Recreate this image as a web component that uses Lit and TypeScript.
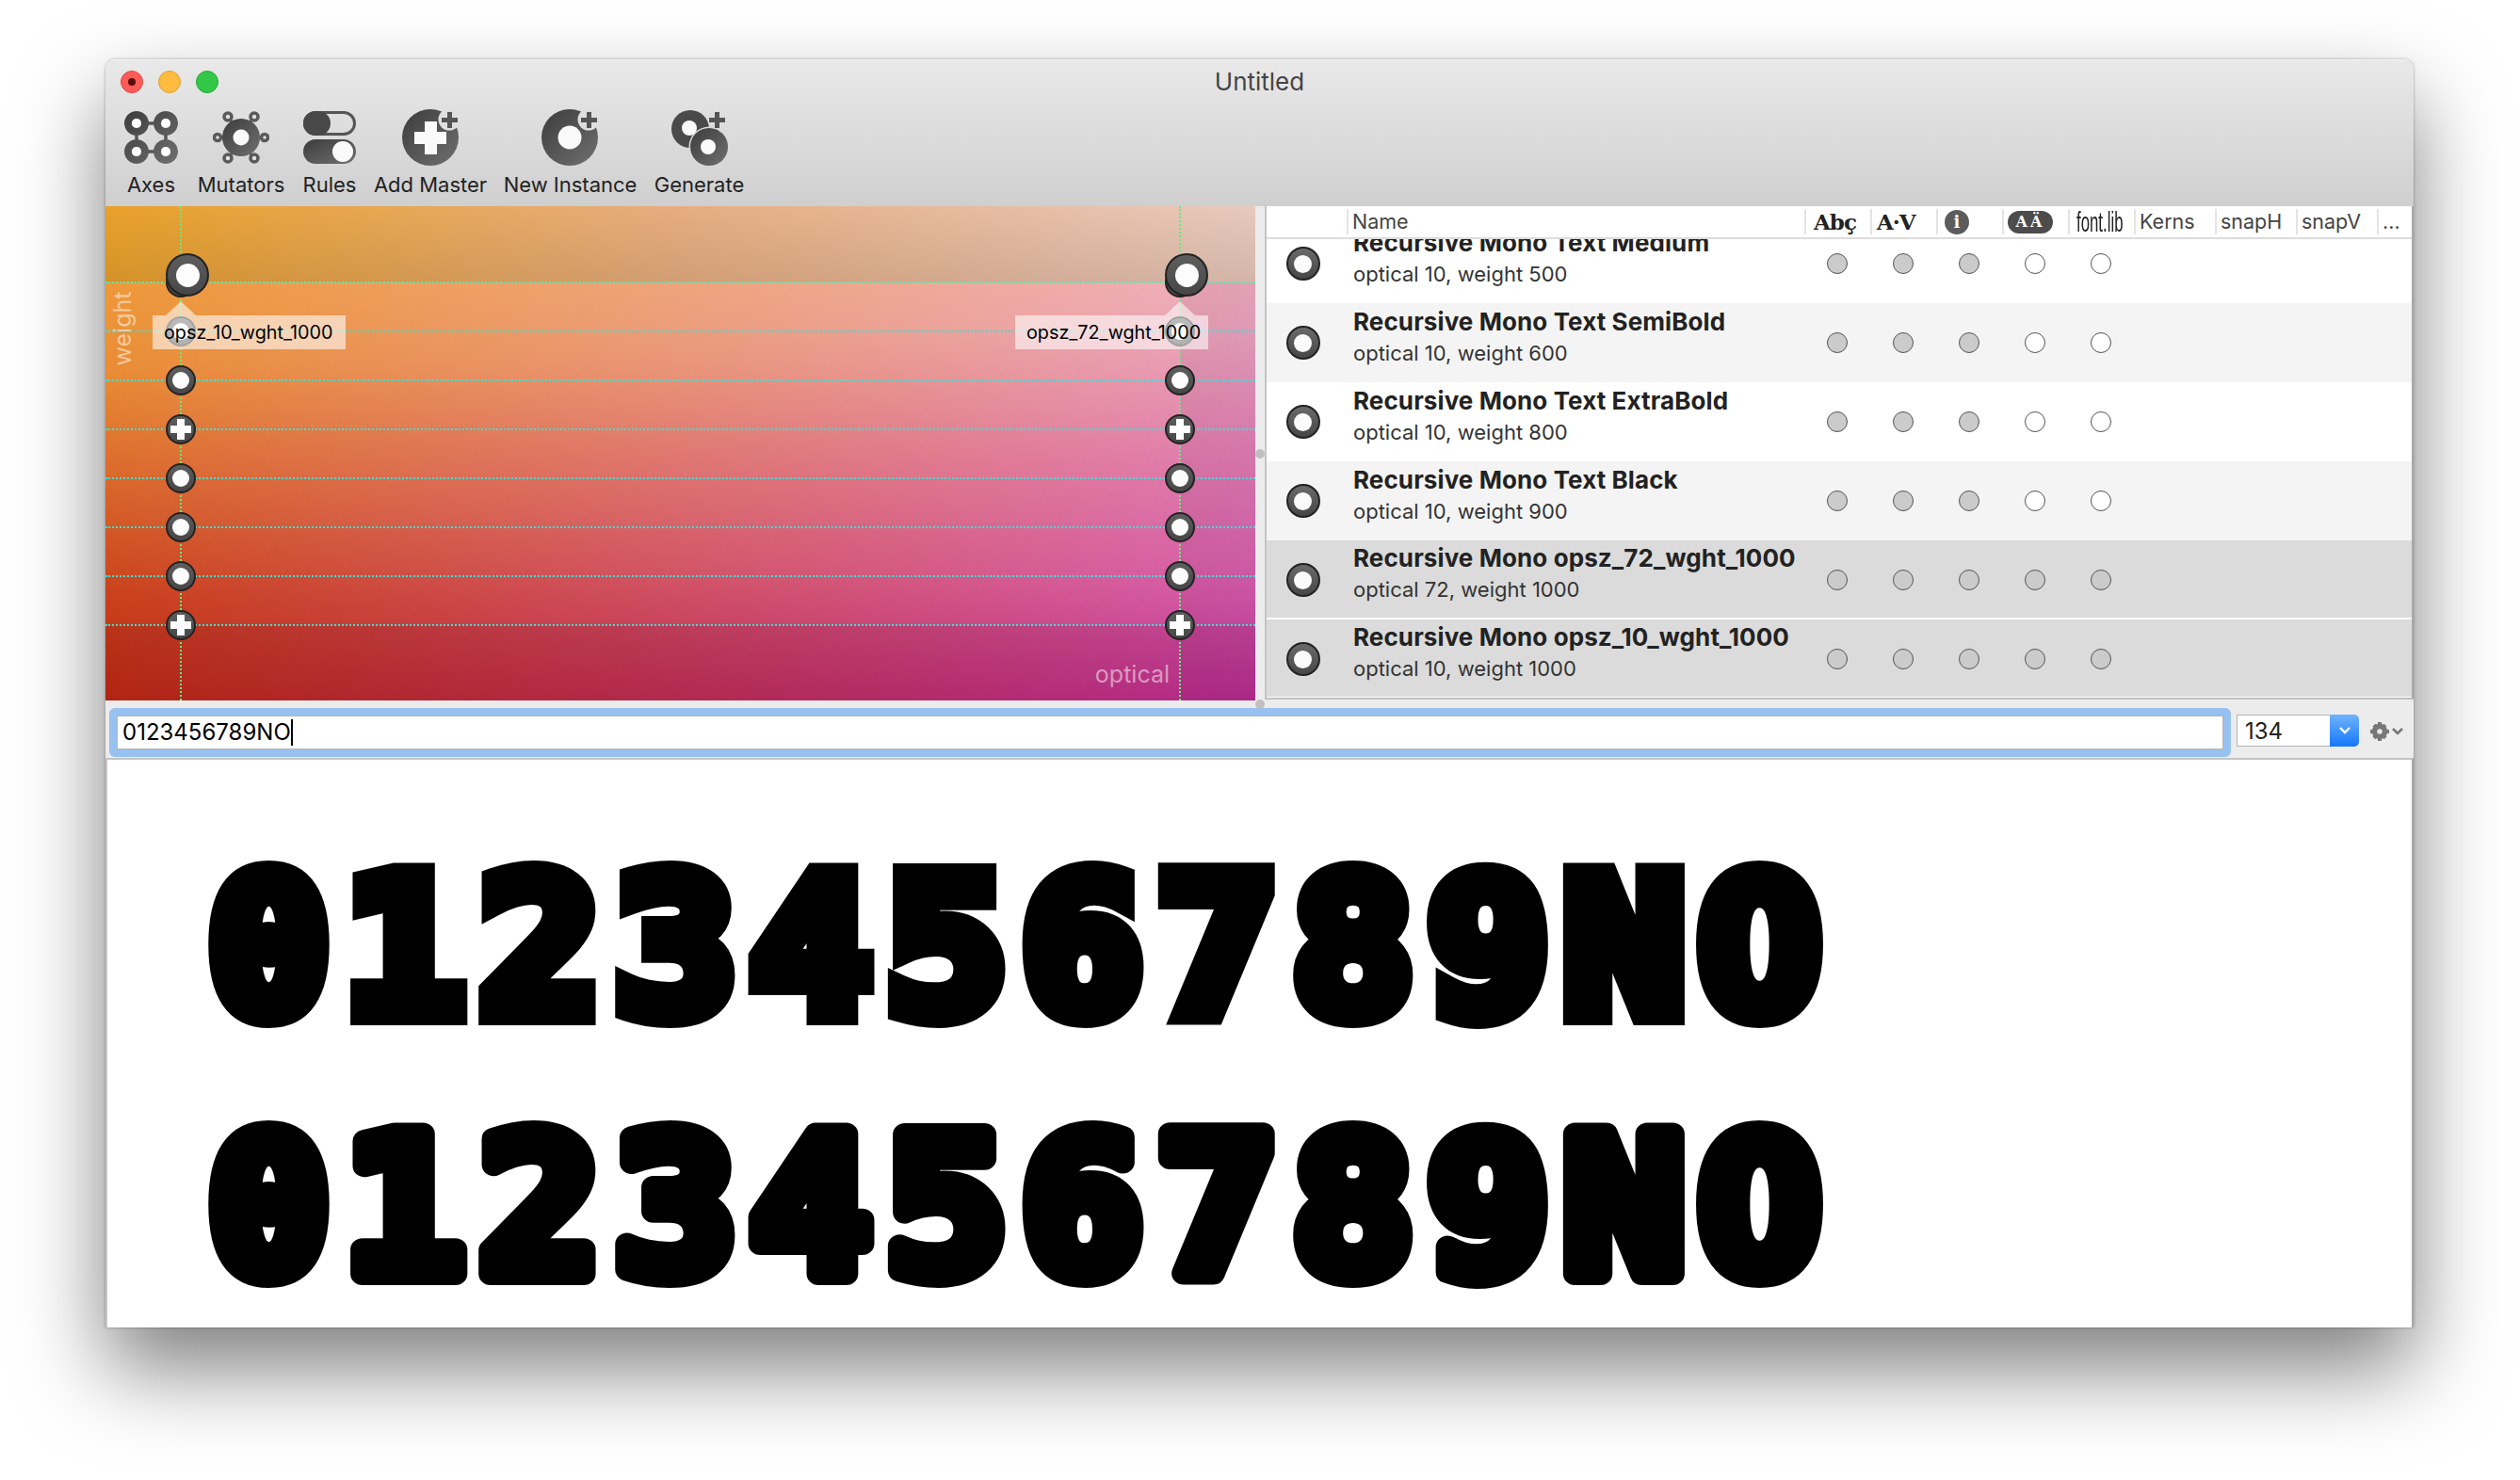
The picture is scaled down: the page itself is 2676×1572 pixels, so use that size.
import { LitElement, html, css, svg } from "lit";
import { customElement } from "lit/decorators.js";

const NAMES = [
  ["Recursive Mono Text Medium", "optical 10, weight 500", ""],
  ["Recursive Mono Text SemiBold", "optical 10, weight 600", "alt"],
  ["Recursive Mono Text ExtraBold", "optical 10, weight 800", ""],
  ["Recursive Mono Text Black", "optical 10, weight 900", "alt"],
  ["Recursive Mono opsz_72_wght_1000", "optical 72, weight 1000", "sel"],
  ["Recursive Mono opsz_10_wght_1000", "optical 10, weight 1000", "sel"],
];

const STOPS = [
  [352, "o"],
  [404, "o"],
  [456, "p"],
  [508, "o"],
  [560, "o"],
  [612, "o"],
  [664, "p"],
];

const DARK = "url(#dk)";

function defs() {
  return svg`<defs><linearGradient id="dk" x1="0" y1="0" x2="1" y2="1">
    <stop offset="0" stop-color="#3c3c3c"/><stop offset="1" stop-color="#707070"/>
  </linearGradient></defs>`;
}

const axesIcon = html`<svg width="57" height="56" viewBox="0 0 57 56">
  ${defs()}
  <path d="M13 13H44V43H13Z" fill="none" stroke="#555" stroke-width="3.5"/>
  <path fill=${DARK} fill-rule="evenodd" d="M13 0a13 13 0 1 0 .01 0ZM13 8a5 5 0 1 1-.01 0ZM44 0a13 13 0 1 0 .01 0ZM44 8a5 5 0 1 1-.01 0ZM13 30a13 13 0 1 0 .01 0ZM13 38a5 5 0 1 1-.01 0ZM44 30a13 13 0 1 0 .01 0ZM44 38a5 5 0 1 1-.01 0Z"/>
  <g fill="#fff"><circle cx="13" cy="13" r="5"/><circle cx="44" cy="13" r="5"/><circle cx="13" cy="43" r="5"/><circle cx="44" cy="43" r="5"/></g>
</svg>`;

const mutatorsIcon = html`<svg width="60" height="56" viewBox="0 0 60 56">
  ${defs()}
  <g stroke="#5a5a5a" stroke-width="3"><path d="M17 6L43 50M43 6L17 50M5 28H55" fill="none"/></g>
  <g fill="#e0e0e0" stroke="#5a5a5a" stroke-width="3.5">
    <circle cx="16" cy="6" r="4"/><circle cx="44" cy="6" r="4"/><circle cx="5" cy="28" r="3.5"/>
    <circle cx="55" cy="28" r="3.5"/><circle cx="16" cy="50" r="4"/><circle cx="44" cy="50" r="4"/>
  </g>
  <circle cx="30" cy="28" r="20" fill=${DARK}/><circle cx="30" cy="28" r="8.5" fill="#fafafa"/>
</svg>`;

const rulesIcon = html`<svg width="56" height="56" viewBox="0 0 56 56">
  ${defs()}
  <rect x="1.5" y="1.5" width="53" height="23" rx="11.5" fill="none" stroke="#555" stroke-width="3"/>
  <path d="M13 0H16A13 13 0 0 1 16 26H13A13 13 0 0 1 13 0Z" fill="#484848"/>
  <rect x="0" y="30" width="56" height="26" rx="13" fill=${DARK}/>
  <circle cx="42" cy="43" r="11" fill="#fafafa"/>
</svg>`;

const addMasterIcon = html`<svg width="60" height="60" viewBox="0 0 60 60">
  ${defs()}
  <circle cx="30" cy="30" r="30" fill=${DARK}/>
  <circle cx="50" cy="11" r="11.5" fill="#dedede"/>
  <path d="M48 3h5v6h6v5h-6v6h-5v-6h-6v-5h6Z" fill="#555"/>
  <path d="M24 13h13v11h10v13H37v11H24V37H13V24h11Z" fill="#fafafa"/>
</svg>`;

const newInstanceIcon = html`<svg width="61" height="60" viewBox="0 0 61 60">
  ${defs()}
  <circle cx="30" cy="30" r="30" fill=${DARK}/>
  <circle cx="50" cy="11" r="11.5" fill="#dedede"/>
  <path d="M48 3h5v6h6v5h-6v6h-5v-6h-6v-5h6Z" fill="#555"/>
  <circle cx="30" cy="30" r="12.5" fill="#fafafa"/>
</svg>`;

const generateIcon = html`<svg width="61" height="60" viewBox="0 0 61 60">
  ${defs()}
  <circle cx="21" cy="21" r="20" fill="#4a4a4a"/>
  <circle cx="41" cy="40" r="21.5" fill="#d8d8d8"/>
  <circle cx="41" cy="40" r="20" fill=${DARK}/>
  <circle cx="20" cy="20" r="8" fill="#fafafa"/>
  <circle cx="40" cy="40" r="8" fill="#fafafa"/>
  <path d="M47 3h5v6h6v5h-6v6h-5v-6h-6v-5h6Z" fill="#555"/>
</svg>`;

const TOOLS = [
  ["Axes", axesIcon, 59],
  ["Mutators", mutatorsIcon, 92],
  ["Rules", rulesIcon, 56],
  ["Add Master", addMasterIcon, 118],
  ["New Instance", newInstanceIcon, 139],
  ["Generate", generateIcon, 95],
] as const;

function handle(x: number, y: number, d: number, kind: string) {
  const hole = d > 40 ? 25 : 18;
  return html`<div
    class="handle"
    style="left:${x - d / 2}px;top:${y - d / 2}px;width:${d}px;height:${d}px"
  >
    ${kind === "p"
      ? html`<svg width="22" height="22" viewBox="0 0 22 22"><path d="M7 0h8v7h7v8h-7v7H7v-7H0V7h7Z" fill="#fff"/></svg>`
      : html`<span class="hole" style="width:${hole}px;height:${hole}px"></span>`}
  </div>`;
}

function listIcon() {
  return html`<span class="ring"><span></span></span>`;
}

const DIGITS = "0123456789NO";
// glyphs are stretched 5% wide, so positions are divided back by the same factor
const XS = Array.from({ length: 12 }, (_, i) => (107 + i * 143.9) / 1.05).join(" ");

@customElement("app-root")
export class AppRoot extends LitElement {
  static styles = css`
    :host {
      display: block;
      width: 2676px;
      height: 1572px;
      padding: 63px 112px 0;
      box-sizing: border-box;
      background: #fff;
      font-family: Inter, "Liberation Sans", sans-serif;
      color: #222;
      overflow: hidden;
    }
    .window {
      width: 2451px;
      height: 1347px;
      display: flex;
      flex-direction: column;
      border-radius: 10px 10px 0 0;
      overflow: hidden;
      box-shadow: 0 44px 90px rgba(0, 0, 0, 0.5), 0 0 3px rgba(0, 0, 0, 0.35);
      background: #fff;
    }
    .top {
      height: 156px;
      flex: none;
      position: relative;
      background: linear-gradient(#e9e9e9, #cfcfcf);
      border-top: 1px solid #f4f4f4;
      box-sizing: border-box;
    }
    .lights {
      display: flex;
      gap: 16px;
      padding: 11px 0 0 16px;
    }
    .light {
      width: 24px;
      height: 24px;
      border-radius: 50%;
      box-sizing: border-box;
      display: flex;
      align-items: center;
      justify-content: center;
    }
    .light.r {
      background: #fc5b57;
      border: 1px solid #e2463f;
    }
    .light.r::after {
      content: "";
      width: 8px;
      height: 8px;
      border-radius: 50%;
      background: #5a0d0a;
    }
    .light.y {
      background: #fdbc40;
      border: 1px solid #dea034;
    }
    .light.g {
      background: #33c748;
      border: 1px solid #27aa35;
    }
    .title {
      position: absolute;
      top: 8px;
      left: 0;
      right: 0;
      text-align: center;
      font-size: 26px;
      line-height: 30px;
      color: #444;
    }
    .tools {
      display: flex;
      gap: 20px;
      padding: 17px 0 0 19px;
    }
    .tool {
      display: flex;
      flex-direction: column;
      align-items: center;
      height: 98px;
    }
    .tool .ic {
      height: 60px;
      display: flex;
      align-items: center;
    }
    .tool .lb {
      margin-top: 7px;
      font-size: 22px;
      line-height: 26px;
      white-space: nowrap;
      color: #222;
    }
    .split {
      height: 525px;
      flex: none;
      display: flex;
      background: #ececec;
    }
    .canvas {
      width: 1221px;
      position: relative;
      overflow: hidden;
      background: linear-gradient(
        #f3a33c 0,
        #ea8e36 32%,
        #d9642a 58%,
        #c9401b 80%,
        #bd2a10 100%
      );
    }
    .canvas .right {
      position: absolute;
      inset: 0;
      background: linear-gradient(
        #f5bcbc 0,
        #eba8c0 25%,
        #e07db4 52%,
        #d65fae 76%,
        #c03299 100%
      );
      -webkit-mask-image: linear-gradient(to right, transparent 0, #000 100%);
      mask-image: linear-gradient(to right, transparent 0, #000 100%);
    }
    .canvas .band {
      position: absolute;
      left: 0;
      right: 0;
      top: 0;
      height: 81px;
      background: linear-gradient(rgba(150, 130, 90, 0) 0, rgba(60, 40, 30, 0.12) 100%);
    }
    .canvas .low {
      position: absolute;
      left: 0;
      right: 0;
      top: 445px;
      bottom: 0;
      background: rgba(80, 0, 40, 0.1);
    }
    .canvas .side {
      position: absolute;
      left: 1141px;
      right: 0;
      top: 81px;
      bottom: 0;
      background: rgba(80, 0, 60, 0.08);
    }
    .band-top {
      position: absolute;
      left: 0;
      right: 0;
      top: 0;
      height: 81px;
      background: linear-gradient(to right, #e9a12a, #e6ae80 50%, #e8c9bd);
    }
    .hline {
      position: absolute;
      left: 0;
      right: 0;
      height: 0;
      border-top: 2px dotted #2fe6d8;
    }
    .hline.first {
      border-top-color: #5ae9b0;
    }
    .vline {
      position: absolute;
      top: 0;
      bottom: 0;
      width: 0;
      border-left: 2px dotted #62ec82;
    }
    .handle {
      position: absolute;
      display: flex;
      align-items: center;
      justify-content: center;
      box-sizing: border-box;
      border-radius: 50%;
      background: linear-gradient(#5e5e5e, #474747);
      border: 2px solid #222;
    }
    .hole {
      border-radius: 50%;
      background: #fcfcfc;
    }
    .tip {
      position: absolute;
      top: 116px;
      width: 205px;
      height: 36px;
      background: rgba(255, 255, 255, 0.58);
      font-size: 19.8px;
      line-height: 37px;
      color: #000;
      padding-left: 12px;
      box-sizing: border-box;
      white-space: nowrap;
    }
    .tip::before {
      content: "";
      position: absolute;
      top: -15px;
      width: 0;
      height: 0;
      border-left: 16px solid transparent;
      border-right: 16px solid transparent;
      border-bottom: 15px solid rgba(255, 255, 255, 0.58);
    }
    .tip.a::before {
      left: 14px;
    }
    .tip.b::before {
      left: 159px;
    }
    .axis {
      position: absolute;
      color: rgba(255, 255, 255, 0.5);
      font-size: 25px;
      line-height: 28px;
    }
    .axis.w {
      left: -21px;
      top: 116px;
      transform-origin: center;
      transform: rotate(-90deg);
    }
    .axis.o {
      right: 91px;
      bottom: 14px;
    }
    .divider {
      width: 10px;
      flex: none;
      position: relative;
    }
    .knob {
      position: absolute;
      left: 0;
      width: 10px;
      height: 10px;
      border-radius: 50%;
      background: #c0c0c0;
    }
    .list {
      flex: 1;
      min-width: 0;
      background: #fff;
      border-left: 2px solid #c4c4c4;
      border-right: 2px solid #aaa;
      border-bottom: 2px solid #c0c0c0;
      margin-bottom: 1px;
      overflow: hidden;
      position: relative;
      display: flex;
      flex-direction: column;
    }
    .row,
    .head {
      display: grid;
      grid-template-columns: 85px 486px repeat(5, 70px) repeat(3, 86px) 1fr;
    }
    .head {
      height: 35px;
      flex: none;
      box-sizing: border-box;
      border-bottom: 2px solid #dcdcdc;
      background: #fff;
      position: relative;
      z-index: 1;
    }
    .head > div {
      border-left: 2px solid #e4e4e4;
      margin: 3px 0 3px;
      padding-left: 4px;
      font-size: 21.5px;
      line-height: 27px;
      color: #444;
      white-space: nowrap;
      display: flex;
      align-items: center;
    }
    .head > div:first-child {
      border-left: 0;
    }
    .head .serif {
      font-family: "DejaVu Serif", "Liberation Serif", serif;
      font-weight: 700;
      color: #222;
      font-size: 23px;
      letter-spacing: -1px;
      padding-left: 8px;
    }
    .head .serif.av {
      padding-left: 5px;
    }
    .head .narrow {
      font-family: "Liberation Sans", sans-serif;
      font-size: 30px;
      color: #222;
      padding-left: 7px;
    }
    .head .narrow span {
      display: inline-block;
      transform: scaleX(0.56);
      transform-origin: left center;
    }
    .head .ctr {
      padding-left: 7px;
    }
    .head .ctr.aa {
      padding-left: 4px;
    }
    .info {
      width: 26px;
      height: 26px;
      border-radius: 50%;
      background: #5c5c5c;
      color: #fff;
      font-family: "DejaVu Serif", serif;
      font-weight: 700;
      font-size: 18px;
      line-height: 26px;
      text-align: center;
    }
    .pill {
      width: 48px;
      height: 24px;
      border-radius: 12px;
      background: #4c4c4c;
      color: #fff;
      font-family: "DejaVu Serif", serif;
      font-weight: 700;
      font-size: 16px;
      line-height: 24px;
      text-align: center;
      letter-spacing: 3px;
    }
    .rows {
      margin-top: -16px;
    }
    .row {
      height: 84px;
      align-items: center;
      box-sizing: border-box;
    }
    .row.alt {
      background: #f4f4f4;
    }
    .row.sel {
      background: #dbdbdb;
      height: 82px;
      margin-bottom: 2px;
    }
    .row > .c {
      display: flex;
      justify-content: center;
    }
    .ring {
      width: 36px;
      height: 36px;
      box-sizing: border-box;
      border-radius: 50%;
      border: 2px solid #222;
      background: linear-gradient(#6a6a6a, #474747);
      display: flex;
      align-items: center;
      justify-content: center;
      margin-right: 8px;
    }
    .row.sel .ring,
    .row.sel .dot {
      margin-top: 2px;
    }
    .ring span {
      width: 19px;
      height: 19px;
      border-radius: 50%;
      background: #fbfbfb;
    }
    .nm {
      padding: 0 0 14px 7px;
    }
    .nm b {
      display: block;
      font-size: 26px;
      line-height: 32px;
      font-weight: 700;
      letter-spacing: 0.1px;
      white-space: nowrap;
      color: #222;
    }
    .nm span {
      display: block;
      margin-top: 4px;
      font-size: 22px;
      line-height: 26px;
      white-space: nowrap;
      color: #333;
    }
    .dot {
      width: 22px;
      height: 22px;
      box-sizing: border-box;
      border-radius: 50%;
      border: 1.5px solid #555;
      background: #cbcbcb;
    }
    .dot.off {
      background: #fff;
    }
    .row.sel .dot.off {
      background: #cbcbcb;
    }
    .field {
      height: 61px;
      flex: none;
      display: flex;
      align-items: center;
      background: #ececec;
      box-sizing: border-box;
      padding-left: 4px;
    }
    .input {
      width: 2253px;
      height: 52px;
      box-sizing: border-box;
      border: 8px solid #97c1f0;
      border-radius: 6px;
      background: #fff;
      box-shadow: inset 0 0 0 1px #b5b5b5;
      font-size: 24px;
      line-height: 36px;
      padding-left: 6px;
      color: #000;
      display: flex;
      align-items: center;
      margin-top: 7px;
    }
    .caret {
      width: 2px;
      height: 28px;
      background: #000;
    }
    .combo {
      margin-left: 6px;
      width: 130px;
      height: 34px;
      display: flex;
      margin-top: 3px;
    }
    .combo .v {
      flex: 1;
      background: #fff;
      border: 1px solid #b5b5b5;
      border-right: 0;
      font-size: 24px;
      line-height: 34px;
      padding-left: 8px;
    }
    .combo .b {
      width: 31px;
      border-radius: 0 5px 5px 0;
      background: linear-gradient(#6fb3fd, #1578fb);
      display: flex;
      align-items: center;
      justify-content: center;
    }
    .gear {
      margin-left: 12px;
      margin-top: 5px;
      display: flex;
    }
    .preview {
      flex: 1;
      border-top: 2px solid #c4c4c4;
      border-left: 2px solid #c4c4c4;
      border-right: 2px solid #a8a8a8;
      background: #fff;
      min-height: 0;
    }
    .preview svg {
      display: block;
    }
    .preview text {
      font-family: "DejaVu Sans Mono", monospace;
      font-weight: 700;
      font-size: 204px;
      fill: #000;
      stroke: #000;
      stroke-width: 24px;
      paint-order: stroke;
    }
  `;

  render() {
    return html`<div class="window">
      <div class="top">
        <div class="title">Untitled</div>
        <div class="lights">
          <div class="light r"></div>
          <div class="light y"></div>
          <div class="light g"></div>
        </div>
        <div class="tools">
          ${TOOLS.map(
            ([label, icon, w]) => html`<div class="tool" style="width:${w}px">
              <div class="ic">${icon}</div>
              <div class="lb">${label}</div>
            </div>`
          )}
        </div>
      </div>
      <div class="split">
        <div class="canvas">
          <div class="right"></div>
          <div class="low"></div>
          <div class="side"></div>
          <div class="band-top"></div>
          <div class="band"></div>
          ${[81, ...STOPS.map((s) => (s[0] as number) - 219)].map(
            (y, i) => html`<div class="hline ${i === 0 ? "first" : ""}" style="top:${y - 1}px"></div>`
          )}
          <div class="vline" style="left:79px"></div>
          <div class="vline" style="left:1140px"></div>
          <div class="axis w">weight</div>
          <div class="axis o">optical</div>
          ${[80, 1141].map((x) =>
            STOPS.map((s) => handle(x, (s[0] as number) - 219, 32, s[1] as string))
          )}
          ${handle(80, 81, 32, "")} ${handle(87, 73, 46, "o")} ${handle(1141, 81, 32, "")}
          ${handle(1148, 73, 46, "o")}
          <div class="tip a" style="left:50px">opsz_10_wght_1000</div>
          <div class="tip b" style="left:966px">opsz_72_wght_1000</div>
        </div>
        <div class="divider">
          <div class="knob" style="top:258px"></div>
          <div class="knob" style="top:524px"></div>
        </div>
        <div class="list">
          <div class="head">
            <div></div>
            <div>Name</div>
            <div class="serif">Abç</div>
            <div class="serif av">A·V</div>
            <div class="ctr"><span class="info">i</span></div>
            <div class="ctr aa"><span class="pill">AÄ</span></div>
            <div class="narrow"><span>font.lib</span></div>
            <div>Kerns</div>
            <div>snapH</div>
            <div>snapV</div>
            <div>...</div>
          </div>
          <div class="rows">
            ${NAMES.map(
              ([name, sub, cls]) => html`<div class="row ${cls}">
                <div class="c">${listIcon()}</div>
                <div class="nm"><b>${name}</b><span>${sub}</span></div>
                <div class="c"><span class="dot"></span></div>
                <div class="c"><span class="dot"></span></div>
                <div class="c"><span class="dot"></span></div>
                <div class="c"><span class="dot off"></span></div>
                <div class="c"><span class="dot off"></span></div>
              </div>`
            )}
          </div>
        </div>
      </div>
      <div class="field">
        <div class="input">0123456789NO<span class="caret"></span></div>
        <div class="combo">
          <div class="v">134</div>
          <div class="b">
            <svg width="14" height="10" viewBox="0 0 14 10"><path d="M2 2l5 5 5-5" fill="none" stroke="#fff" stroke-width="2.4"/></svg>
          </div>
        </div>
        <div class="gear">
          <svg width="38" height="22" viewBox="0 0 38 22">
            <g fill="#777">
              <circle cx="10" cy="11" r="5.5" fill="none" stroke="#777" stroke-width="5.5"/>
              <path d="M8 1h4v4H8ZM8 17h4v4H8ZM0 9h4v4H0ZM16 9h4v4h-4Z"/>
              <path d="M2.5 5.5l2.8-2.8 3 3-2.8 2.8ZM14.7 2.7l2.8 2.8-3 3-2.8-2.8ZM2.5 16.5l3-3 2.8 2.8-3 3ZM11.7 16.3l2.8-2.8 3 3-2.8 2.8Z"/>
            </g>
            <path d="M24 8l5 5 5-5" fill="none" stroke="#777" stroke-width="2.6"/>
          </svg>
        </div>
      </div>
      <div class="preview">
        <svg width="2447" height="603" viewBox="0 0 2447 603">
          <g transform="scale(1.05 1)">
            <text x=${XS} y="270" stroke-linejoin="miter" stroke-miterlimit="3">${DIGITS}</text>
            <text x=${XS} y="546" stroke-linejoin="round">${DIGITS}</text>
          </g>
        </svg>
      </div>
    </div>`;
  }
}
